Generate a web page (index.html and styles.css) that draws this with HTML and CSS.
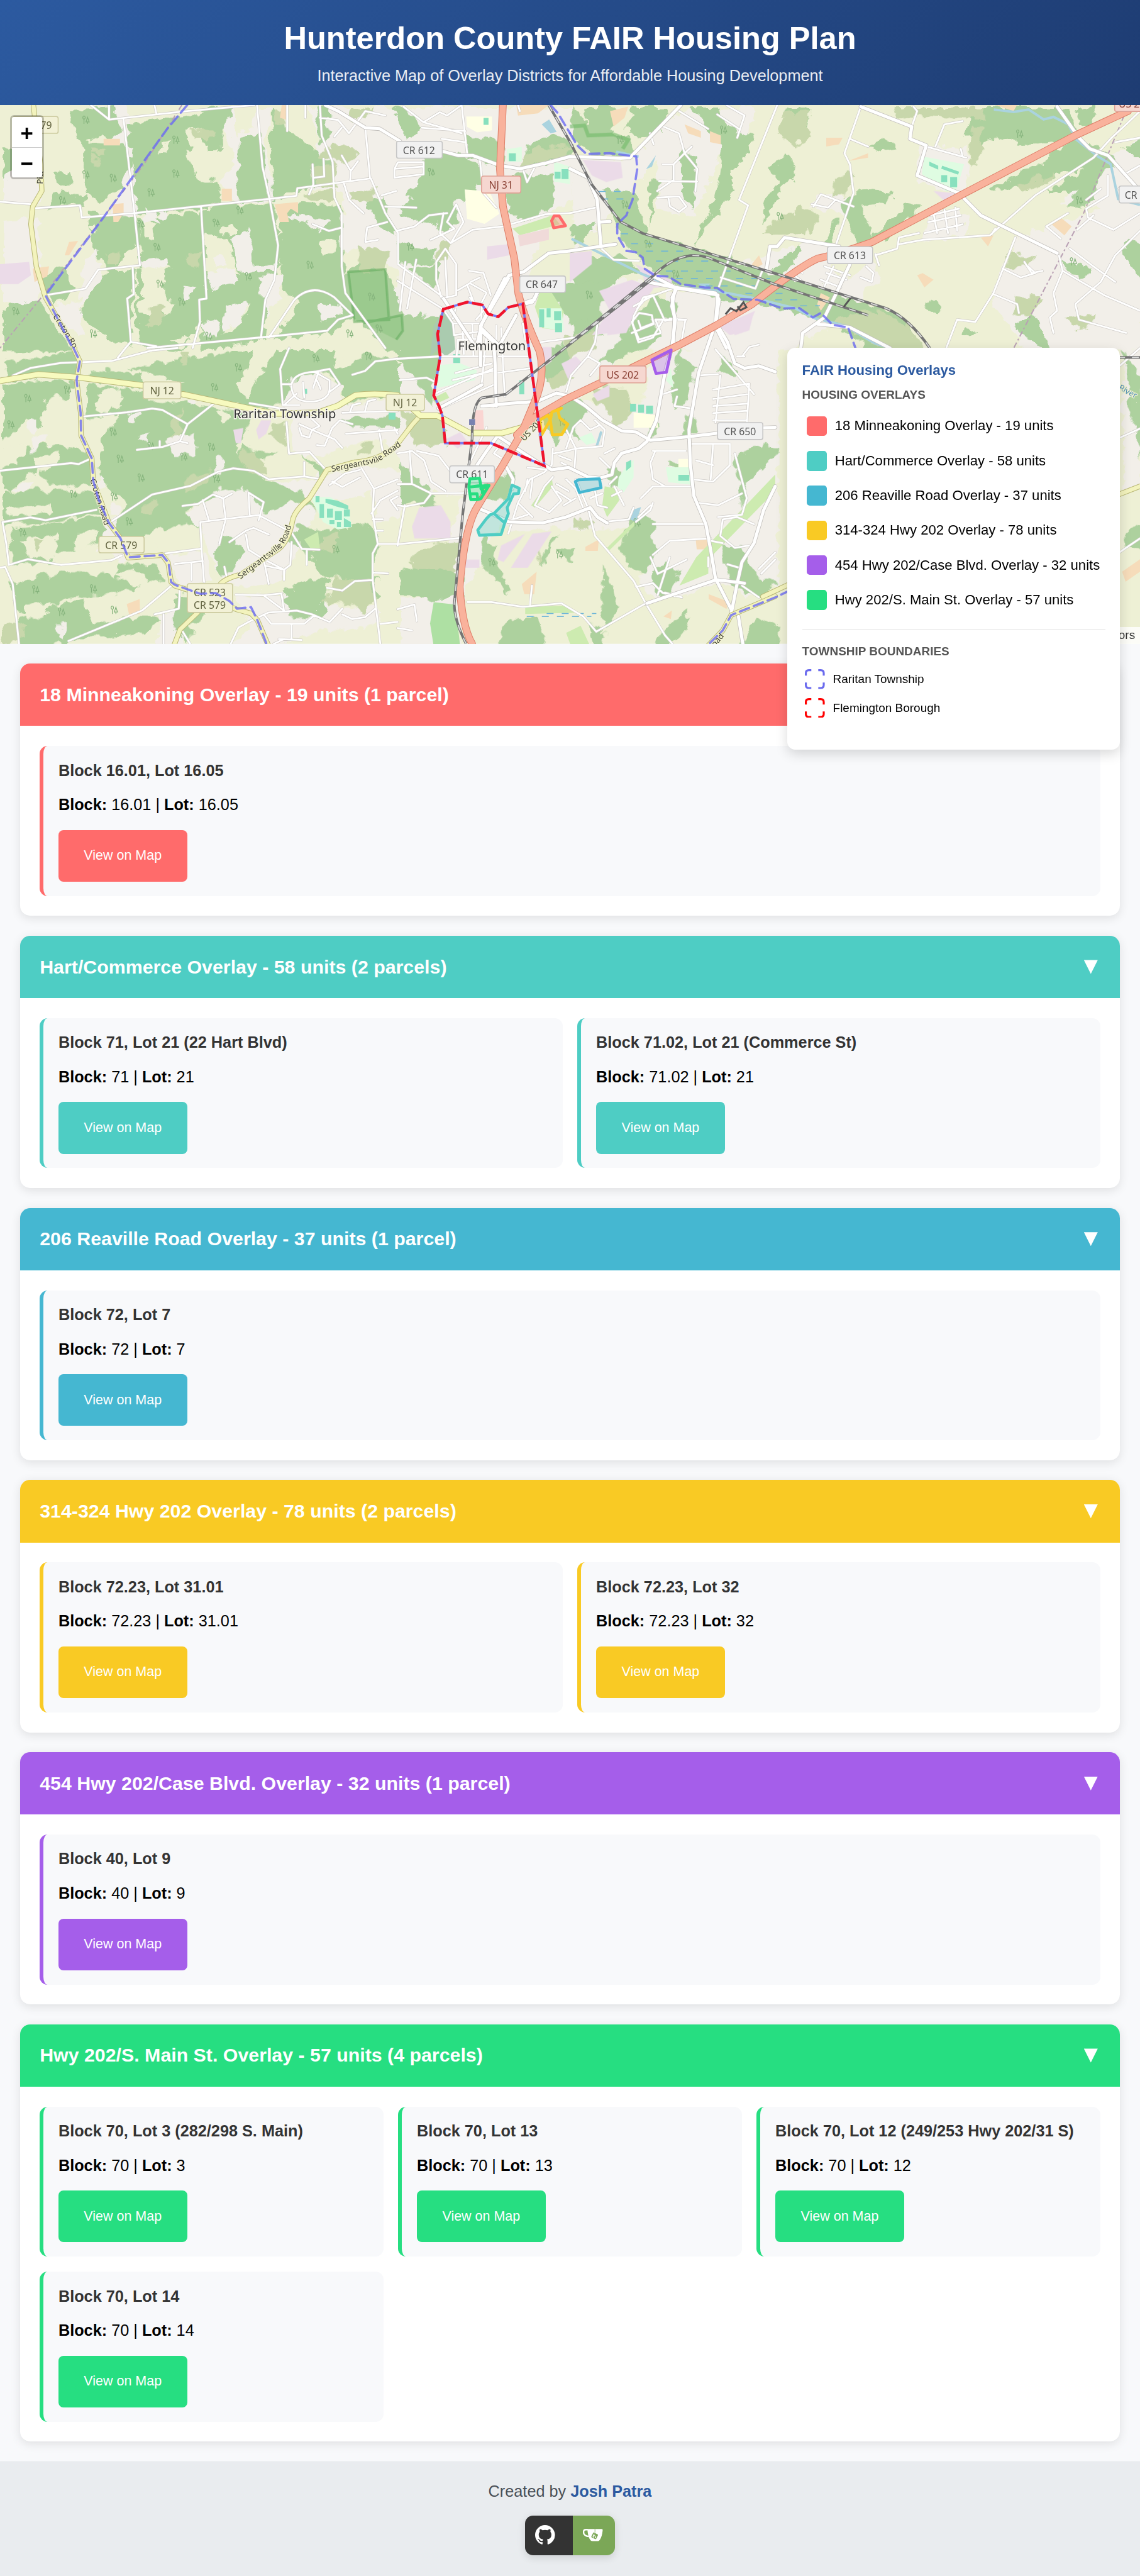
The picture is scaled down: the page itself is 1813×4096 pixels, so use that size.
FILE: index.html
```html
<!DOCTYPE html>
<html lang="en">
<head>
<meta charset="utf-8">
<title>Hunterdon County FAIR Housing Plan</title>
<link rel="stylesheet" href="styles.css">
</head>
<body>
<header class="header">
  <h1>Hunterdon County FAIR Housing Plan</h1>
  <p>Interactive Map of Overlay Districts for Affordable Housing Development</p>
</header>

<div class="map">
<svg class="map-canvas" viewBox="0 211 2294 1084" preserveAspectRatio="none">
<defs>
  <filter id="ragged" filterUnits="userSpaceOnUse" x="0" y="211" width="2294" height="1084">
    <feTurbulence type="turbulence" baseFrequency=".03" numOctaves="2" seed="4"/>
    <feDisplacementMap in="SourceGraphic" scale="22" xChannelSelector="R" yChannelSelector="G"/>
  </filter>
  <symbol id="trees" viewBox="0 0 20 24" overflow="visible"><path d="M5 22V10M5 2a3 4 0 1 0 .1 0M14 22v-5M14 5l-4 12h8z" fill="none" stroke="#86b47d" stroke-width="1.2"/></symbol>
  <g id="streets">
    <g transform="scale(.7315 .4464)">
      <path d="M250 473L300 538L515 500L700 473M340 538L370 960L385 1195L270 1215L235 1300L125 1330M365 1200L368 1325L350 1345L360 1540L345 1568M360 1540L430 1560M0 908L50 915L90 920L92 938L220 925L225 980L370 960L735 897L815 882L818 848L1020 803L1060 960L1095 1050L1095 1190L1220 1340M553 930L568 1345L548 1350L550 1450L530 1568M707 473L722 750L742 900L765 1105L755 1260L730 1350L718 1520M880 473L885 610L915 730L920 890L940 960L940 1200L950 1320L1060 1568M405 1568L718 1520L900 1490L930 1440L970 1420M740 1520L810 1350Q860 1270 920 1340L970 1420M880 530L930 540L960 600L1005 500L1060 520M940 575L920 615M1005 575L1018 803M860 740L862 830L850 875M865 800L892 795L890 715M940 700L965 770L985 725M965 770L963 815M945 820L960 900L1000 960M1085 800L1165 785L1165 730L1095 730L1085 760ZM1085 760L1165 750M1050 880L1090 860M1060 930L1145 935M1065 1000L1010 1025L1005 1090L1040 1080M1090 1040L1140 1020L1180 970L1230 960M1185 1080L1250 1030L1230 1000L1255 920L1275 1000L1240 1095L1210 1050L1220 960M1240 1095L1300 1035L1383 1020L1500 965L1568 960M1110 480L1165 550L1270 600M1165 550L1210 505L1230 520L1270 473M1160 575L1280 590M1215 625L1280 640M1270 473L1285 690M1320 720L1330 870L1365 935M1425 473L1430 500M1200 1180L1225 1120L1255 1190L1255 1330L1215 1345L1200 1260ZM1225 1160L1230 1340M1290 1220L1330 1230L1350 1330M1295 1270L1320 1250M1440 770L1450 820L1475 740M1310 1440L1330 1400M1115 1180L1100 1400M1145 1170L1120 1390M300 473V538M425 473L430 510M790 473L790 590M840 473V530M860 1010L905 1040L940 1025"/>
    </g>
    <g transform="translate(1147 0) scale(.7315 .4464)">
      <path d="M570 473L465 900L490 925L410 1290M250 565L300 600L315 690L350 760L345 860M315 690L285 740L285 810L240 860M245 815L350 818M240 890L300 885L320 930L300 955L275 930L270 885M315 690L335 660M255 740L285 740M430 473L480 520L460 620M405 515L465 580M300 500L380 580M220 600L230 650M800 480L755 690L770 740L780 870L730 1110M770 625L820 660M670 930L690 875L780 930M665 920L710 935L730 900M945 480L955 500L940 570M1080 545L1030 560L1005 660M980 660L1090 710M1075 670L1080 705M840 1150L900 1120L905 1070L960 1050M840 1145L850 1195M905 1100L970 1080L1155 1060L1280 880L1440 710L1490 620L1530 560L1568 500M1160 1055L1170 1030M1225 1070L1165 1320L1115 1450L1065 1440L1035 1568M1310 1020L1360 970L1370 960M1310 1020L1350 1075M1480 790L1480 880L1420 940L1425 980L1495 1035L1568 960M1395 1035L1440 970M1345 1150L1355 1220L1470 1330L1568 1400M1355 1220L1330 1320L1340 1400L1320 1430L1330 1500M1375 1120L1440 1200L1500 1270M1568 1040L1500 1150L1460 1270L1390 1370L1400 1440L1530 1500M1190 1210L1240 1250L1280 1230L1260 1200M1250 1180L1270 1230L1300 1220M1165 1325L1230 1370L1235 1410M700 1200L770 1240M705 1230L760 1260M690 1260L745 1295M725 1200L700 1290M415 1250L510 1300L530 1215M0 960L70 935M170 1500L230 1460L225 1420L190 1410L170 1450L190 1530L250 1500L235 1440L320 1440M175 1380L230 1330L290 1295M185 1390L210 1340M610 1230L640 1270M620 1210L640 1230M800 1250L830 1270L835 1230L815 1200M80 1110L120 1170L190 1175M1530 780L1568 745M1500 640L1568 620M1510 850L1530 900M1420 900L1460 850M990 970L1070 940M985 1000L1075 970M975 1050L1080 1010M1000 960L1010 1050M1030 945L1040 1050M1060 935L1065 1040"/>
    </g>
    <g transform="translate(0 700) scale(.5102 .3827)">
      <path d="M50 145L120 105L240 78L440 68L600 12L700 0M465 50L495 0M325 360L500 338L600 318L640 325L740 400L850 285M740 400L710 490L640 520L540 535M630 520V490M710 490L740 500M0 645L280 605L310 610L360 580M430 920L600 770L750 725L860 650L920 632L1000 645L1060 690L1200 675L1270 690M10 915L120 890L180 905L380 850M10 915L25 1030L35 1140L110 1110L240 1140L440 1115L480 1090M0 1155L20 1150L50 1240L75 1555M650 1080L790 1055M790 915L795 1060L805 1230M790 915L880 900L1020 878L1150 970L1190 1055L1260 1060M690 1135L800 1120M755 1130V1220M720 830L780 820L840 770L880 790L915 765M800 800L825 910M880 790L890 900L865 1030M980 760L1040 810L1020 905M980 760L985 875M905 1020L970 960L1000 945L1060 980M970 980L980 1060L1040 1110L1060 1240M1040 1110L1120 1165L1120 1220M1150 1020L1145 1140L1120 1165L1050 1145M1210 1060V1140M270 1540L560 1380L680 1245M680 1245L710 1260L705 1370L610 1400M645 1400V1555M1140 0L1105 110L1115 300M1115 190H1150Q1160 130 1240 125L1300 110L1340 190L1300 230V170L1240 125M1150 200Q1150 290 1240 280Q1300 270 1300 210M1195 180L1200 260M1255 130L1235 210M1250 170L1265 215M1115 300H1180M1170 240L1120 300M985 290L1120 320M1130 390L1140 555L1220 545L1285 640M1180 400L1230 430L1220 470L1190 460L1180 420M1230 430L1320 480L1350 525M1250 510L1280 515L1310 420L1340 380L1390 400M1230 430L1260 410L1220 360M1350 340L1568 330M1380 340L1390 300L1420 290M1440 330L1450 280L1480 270M1390 140L1440 120L1480 70L1568 55M1365 450L1568 430M1495 430L1510 550M1555 420L1568 450M1425 630L1475 740L1470 870L1490 1030L1470 1080V1220L1500 1555M1300 720L1360 660L1420 640M1310 700L1350 730L1420 680M1475 740L1568 690M1490 1030H1568M1465 870L1500 800L1568 750M1470 900H1510M1480 960H1510M1290 1260L1350 1275L1400 1225L1470 1220M1470 1180L1530 1185M930 1297L1040 1300L1120 1380M1040 1300L1110 1290L1120 1380M980 1440L1060 1390L1170 1380L1230 1400L1300 1440L1350 1370M1040 1400L1070 1450L1200 1450L1240 1405M1150 1450V1530M1350 1400L1390 1425L1440 1415L1480 1370M910 1555L940 1470L980 1440M885 1150L895 1210M1500 1450L1568 1440M720 1490L750 1555M1100 1530L1190 1535M1568 780L1540 800L1568 850M1200 600V670M1080 1555L1120 1530"/>
    </g>
    <g transform="translate(800 560) scale(.4847 .4753)">
      <path d="M0 10L190 130L230 190L340 190M230 190L235 240L340 225M245 330L250 260L340 255M350 120L345 220M175 330H400M270 200L275 320M310 190L315 330M240 400L390 360M230 430L400 390M150 490L400 380M200 540L400 450M410 200L405 540M430 210L445 500M460 300L530 300M420 330L540 330M410 400L550 380M590 270L740 250L830 180M830 190L820 270L790 330L720 410L700 480M790 330L840 360L800 410M980 160L1020 80L1060 70L1110 180L1160 170M980 160L975 190L1000 270L1060 250L1100 180M1000 180L1010 210L1060 190M1130 170L1195 175L1180 260M1320 300L1480 490M1255 410L1330 405M1310 470L1460 445L1450 620M1310 510L1450 490M1310 540L1450 530M1310 570L1450 560M1310 600L1450 600M1340 410L1320 610M1410 330L1440 330M1430 330L1460 290L1500 280M1160 500L1150 540L1220 550M1160 470L1100 490M1070 730L1050 780L1060 850L1110 880M1060 730L1195 730M1210 730L1220 700L1380 700L1380 790L1310 860L1220 850M1240 770L1310 790M1310 700L1300 850M1400 740L1450 930L1430 1000L1330 1010M1250 950L1330 960L1430 910M1060 1040L1280 1040M1280 1050L1300 1110L1350 1120M1060 1170L1130 1110L1300 1100M1050 1180L1080 1250L1200 1190M1130 1180L1080 1340M1010 930L1060 880L1220 880M990 1030L1050 980L1060 950M1350 1020L1340 1090L1400 1140L1460 1130M1350 1020L1410 1010L1480 1040M1370 1210L1420 1225M1500 1230L1568 1160M1510 1250L1568 1190M740 850L790 970L820 1090L980 1280L1030 1375L1110 1510L1150 1557M610 820L640 790L645 720M600 720L590 660M630 810L540 800M645 840L610 880L570 960L630 990L680 940L640 880M610 820L550 850L500 950L460 1080M500 950L560 1010M540 850L530 900M560 850L550 930M700 720L730 630L760 600M700 640L740 720L850 710L860 640L820 600M760 600L800 640L840 620M650 740L700 730L740 720L735 800M670 750L720 770M680 780L700 790M700 850L740 890L770 970M660 870L710 900M660 900L720 940M690 960L740 930M820 900L830 960L870 970M800 930L850 910M820 1000L860 1030L960 1020L980 970M900 880L940 960M890 920L930 900M880 870L910 840M860 740L900 720M840 760L880 800M1000 1010L1050 960M0 740L60 730L110 770L140 860L200 900M50 730L60 870L140 910L290 908M0 870L60 870M0 960L30 965L110 950L140 910M30 960L0 1130M0 1125L290 1095M80 730L170 750L230 830M0 340L170 330M10 430L120 420L160 440M290 1370L390 1370L520 1390L680 1375L770 1430L825 1495L1030 1375M550 1380L558 1300M990 1305L1060 1290L1100 1330L1150 1345M1110 1330L1180 1350M260 1557L0 1557M0 1400L70 1380L80 1450M0 1480L60 1490M370 630L290 800M430 700L400 740L430 760M450 800L480 850L470 890M540 1000L450 1030M230 170L240 130M250 50L300 20L370 60L350 100M290 30L320 110L300 80M1430 1300L1500 1350M1290 1220L1290 1180M370 230L350 440M520 190L530 260"/>
    </g>
    <path d="M2254 1110L2294 1083M2254 735L2294 700M2254 880L2294 862"/>
  </g>
  <g id="avenues">
    <path transform="scale(.7315 .4464)" d="M895 473L930 500L1005 575L1045 580L1100 635M1215 680L1260 700L1300 700L1375 745L1430 760L1500 735L1568 705M1568 1130L1510 1140L1440 1225L1400 1240L1325 1460L1310 1568M1440 1365L1470 1350L1480 1310M1325 1480L1380 1568M1420 1420L1370 1568M1220 1345L1310 1568"/>
    <path transform="translate(1147 0) scale(.7315 .4464)" d="M305 473L165 710M0 705L140 712L165 710M0 760L50 800L75 900L85 1110M0 1130L125 1100M85 1000L110 998M800 480L940 570L935 625L980 655L955 790L1070 870L1130 970L1340 1140M1340 480L1400 620L1430 670L1480 700L1568 860M770 1190L730 1330L700 1430L640 1500L635 1568M680 1460L770 1475L880 1568M230 1245L290 1295L400 1320L410 1350L400 1470L430 1568M290 1295L280 1380L290 1440L280 1568M540 1220L550 1110L570 1110L590 1070L740 1110"/>
    <path transform="translate(800 560) scale(.4847 .4753)" d="M445 0L345 200L345 220L400 270L405 360L410 540M345 220L345 370M380 140L460 0M345 230L330 290M170 550L280 490L350 450M350 540L470 528L580 520L660 485L720 500L780 540L850 600L930 645L990 650L1050 685L1205 670L1330 655M1568 630L1515 632M1160 40L1140 80L1150 170L1145 270L1110 400L1075 600L1035 690L1000 720L930 740L900 780L890 830L840 845L790 840L710 800L640 810L610 790M1040 15L1160 40L1330 70L1320 190L1250 400L1210 640L1215 780L1230 920L1280 1040L1300 1150L1320 1270L1385 1400M1568 880L1520 980L1480 1120L1430 1200L1410 1290L1385 1420M1415 1430L1435 1557M1035 1375L1325 1275L1440 1290M1330 200L1370 270L1400 360L1440 380L1500 370L1568 395M340 975L400 1000L460 1030L600 1035L700 1010L800 970L830 1010L870 1035M330 790L370 730L420 660M420 670L600 790M450 795L480 850L475 890M520 110L560 100L580 60"/>
  </g>
  <g id="county-roads">
    <path transform="scale(.7315 .4464)" d="M92 473L100 600L112 740L115 860L90 930L85 1010L100 1200L125 1340L205 1568"/>
    <path transform="translate(0 700) scale(.5102 .3827)" d="M290 0L315 70L302 170L318 340L320 460L362 580L368 700L430 920L475 1000L505 1102L640 1088L663 1130L675 1230L690 1250L790 1292L935 1375L990 1395L1015 1430L1060 1568M685 1568L710 1480L780 1390M870 1240Q890 1210 950 1190L1100 1055Q1140 1010 1155 900Q1165 850 1220 790L1290 640L1400 600Q1500 590 1568 510"/>
    <path transform="translate(800 560) scale(.4847 .4753)" d="M0 700L60 620L95 580M1568 1345L1385 1425L1350 1490L1270 1575"/>
    <path d="M1535 1200L1610 1165M2240 999L2294 978"/>
  </g>
  <g id="state-road">
    <path d="M0 766L76 753L158 759L286 775M368 793L551 832L640 830L680 816L715 795Q750 790 800 795L846 836L880 836L945 871H1010L1050 860"/>
  </g>
  <g id="trunk">
    <path d="M1012 211L1006 340L1012 415L1035 520L1043 590Q1055 640 1086 707Q1098 760 1075 810L1050 870L1012 935L960 1020Q935 1060 925 1180Q930 1260 950 1295"/>
    <path d="M2270 223L2164 272L1915 402L1754 487Q1690 510 1645 520Q1610 535 1513 612L1440 655L1370 692L1240 755L1139 803L1075 840L1040 875"/>
  </g>
  <g id="rail">
    <path d="M1104 211L1147 285L1190 370L1249 446L1293 469L1557 549L1783 620Q1830 640 1871 700M1147 690L1315 554Q1370 500 1425 518L1557 571L1747 634M1314 560L1091 736L1018 793L970 800Q950 810 950 883L931 1035L914 1216Q915 1250 938 1295M2250 719H2294"/>
  </g>
  <path id="croton-a" d="M106 636L148 702L153 744"/>
  <path id="croton-b" d="M181 965L211 1060L235 1110"/>
  <path id="serg-a" d="M484 1165L565 1103Q585 1080 594 1020"/>
  <path id="serg-b" d="M668 949L760 930L812 893"/>
</defs>

<rect y="211" width="2294" height="1084" fill="#eef0d5"/>

<g filter="url(#ragged)">
<!-- built-up land -->
<g fill="#f2efe9">
  <path transform="scale(.7315 .4464)" d="M255 473L340 473L360 560L300 600ZM300 540L345 540L370 960L290 970L330 800ZM580 473H740L720 640L750 890L640 910L600 830L640 700ZM840 473H1568V900L1500 940L1380 1568H1180L1100 1420L1060 1400L1090 1200L1000 1120L900 1120L840 1000L940 960L930 850L820 830L840 700L870 620ZM0 980L100 970L110 1300L70 1400L0 1360ZM0 770L60 700L110 760L100 910L0 900Z"/>
  <path transform="translate(1147 0) scale(.7315 .4464)" d="M0 700H180L220 560L320 473H500L470 640L420 620L380 780L330 960L240 930L230 700L180 800L0 1130ZM390 1220L640 1070L740 1110L700 1200L760 1240L830 1170L850 1240L740 1420L600 1560H200L50 1568L290 1290L500 1340ZM950 640L1090 660L1080 880L950 800ZM980 930L1090 950L1080 1060L960 1070ZM1220 1060L1568 860V1568H1250L1150 1340ZM1340 900L1420 760L1568 600V960ZM670 860L790 880L760 960L660 930Z"/>
  <path transform="translate(0 700) scale(.5102 .3827)" d="M860 740L950 720L1100 780L1230 840L1140 1120L1060 1250L880 1220L790 1000L720 850ZM1050 690L1280 660L1420 600L1568 650V880L1480 900L1460 740L1350 780L1230 790L1170 740L1060 740ZM1110 110L1220 100L1340 180L1330 280L1200 330L1380 280L1568 250V560L1480 460L1330 500L1260 550L1140 550V370L1110 330ZM650 1080L800 1050L820 1200L700 1250ZM920 1290L1140 1280L1330 1350L1480 1340L1480 1440L1240 1480L1080 1555H890L980 1440ZM400 900L480 850L560 960L480 1110L370 1060ZM620 1380L720 1370L700 1555H610Z"/>
  <path transform="translate(800 560) scale(.4847 .4753)" d="M0 0H1040L900 330L720 510L1000 530L1050 300L1568 260V1290L1440 1340L1330 1280L1060 1360L1000 1290L1020 1030L860 1050L400 1050L330 1190L270 1300L240 1557H0V1340L120 1340L260 900L0 900ZM950 200L1120 60L1180 70L1190 260L1050 300Z"/>
  <path d="M2254 700H2294V980H2254Z"/>
</g>

<!-- woodland -->
<g fill="#add19e">
  <path transform="scale(.7315 .4464)" d="M190 485L300 473L330 570L300 620L270 590L230 640L180 560ZM0 650L40 670L30 740L0 800ZM135 770L180 765L190 810L160 830ZM345 545L520 500L560 500L600 560L600 690L560 660L545 570L510 560L500 640L590 800L600 910L540 930L370 960ZM220 720L360 690L330 820L270 900L230 860ZM150 850L230 870L220 920L120 925ZM220 620L340 640L340 700L220 740ZM540 473L640 473L600 560ZM650 610L710 590L730 880L650 900ZM740 473L800 600L840 640L910 720L850 750L860 820L740 890ZM820 900L930 910L940 1220L1000 1130L1060 1200L1100 1420L1150 1400L1210 1480V1568H1060L970 1420L900 1490L740 1520L820 1350L760 1260L765 940ZM500 990L560 930L745 900L765 1110L750 1250L650 1230L620 1060L530 1080ZM240 940L370 970L380 1090L340 1110L300 1230L240 1080ZM375 980L550 940L560 1250L470 1220L440 1150L380 1200ZM270 1220L365 1200L360 1330L350 1540L290 1520L210 1400ZM370 1200L550 1200L560 1400L490 1568L370 1540ZM560 1220L740 1240L730 1350L720 1520L540 1568ZM0 1380L100 1340L160 1490L190 1568H0ZM1170 650L1285 690L1320 760L1300 870L1240 900L1190 1000L1090 950L1140 850ZM1270 590L1380 640L1375 740L1290 700ZM1400 790L1520 760L1510 920L1440 980L1390 940ZM1440 640L1510 590L1568 640L1568 700L1440 740ZM1080 1080L1190 1110L1180 1180L1090 1180ZM1070 473H1110L1160 560L1120 620ZM1190 880L1240 860L1250 1000L1200 1040ZM100 1230L170 1190L200 1300L140 1360ZM410 650L470 600L520 640L480 800L430 760ZM1180 1190L1200 1150L1190 1300L1120 1200ZM1130 830L1190 800L1180 860L1110 880ZM860 473H900L900 600L870 640ZM1000 890L1050 870L1080 1050L1030 1000Z"/>
  <path transform="translate(1147 0) scale(.7315 .4464)" d="M0 473L50 560L150 600L180 690L50 690L0 620ZM30 473H130L100 600L50 590ZM170 473L260 473L250 560L190 620L150 570ZM330 473H400L450 580L500 600L480 690L430 760L440 850L370 1020L330 1110L380 930L400 780L410 640L360 560ZM80 840L170 850L190 1000L210 1040L380 1130L540 1220L680 1280L770 1340L900 1400L960 1568H820L700 1430L660 1430L590 1390L500 1350L440 1350L300 1280L210 1200L130 1060ZM210 810L240 800L215 1020ZM520 1000L530 880L570 810L540 740L590 680L620 770L570 850ZM580 473H650L640 600L580 560ZM730 900L790 850L880 860L870 900L790 920L820 1040L860 1010L910 920L960 910L870 1060L800 1110L770 1040ZM1100 473H1360L1390 600L1470 680L1500 740L1380 760L1200 850L1150 830L1280 730L1370 620L1240 640L1170 600L1120 650L1080 590ZM820 650L860 610L890 650L850 670ZM1360 910L1410 780L1450 780L1420 920ZM1300 850L1440 730L1470 720L1450 800L1370 850ZM980 1340L1015 1370L1005 1400L975 1380ZM1075 1460L1110 1480L1100 1510L1070 1500ZM1220 1440L1270 1400L1310 1568L1240 1500ZM1340 1160L1420 1180L1420 1240L1370 1230ZM1530 1060L1568 1100V1260L1510 1110ZM1568 700L1510 650L1568 620ZM550 1200L620 1080L630 1110L560 1260ZM0 1160L130 1130L190 1200L100 1270L0 1350ZM690 1080L720 980L735 990L710 1090ZM300 640L340 700L330 940L300 860ZM0 1000L60 990L40 1080L0 1100ZM0 1400L80 1380L60 1480L0 1520ZM1380 473H1440L1420 560L1390 540Z"/>
  <path transform="translate(0 700) scale(.5102 .3827)" d="M0 60L280 0L300 140L150 125L30 160ZM0 180L150 150L295 165L260 260L180 240L140 410L90 360L0 480ZM340 100L560 120L540 190L330 155ZM500 90L900 0H1300L1310 80L1360 100L1400 60L1568 80V240L1400 250L1350 290L1340 190L1280 110L1170 130L1130 180L1110 290L970 300L730 240L600 190L720 170ZM330 180L560 210L570 260L840 290L980 340L950 420L920 500L960 620L1060 690L1180 740L1230 840L1130 790L1030 860L960 720L860 740L720 840L780 920L780 1000L580 960L480 1060L440 930L490 800L400 700L380 600L410 420L470 330L330 360ZM0 510L240 500L350 560L360 700L200 720L130 630L30 740L0 720ZM0 740L370 740L400 850L180 900L0 910ZM30 930L390 870L410 1000L240 1060L180 1120L40 1120ZM1350 90L1440 0L1568 60L1490 210L1340 280ZM1190 540L1280 630L1260 680ZM1260 940L1440 910L1480 1000L1460 1170L1300 1190L1240 1140L1180 1020L1100 1010L1170 920ZM460 1110L600 1130L640 1210L430 1190ZM30 1220L240 1170L420 1180L540 1250L400 1280L250 1300L210 1340L130 1350L60 1380ZM60 1400L320 1300L350 1440L540 1400L620 1400L560 1480L280 1520L220 1555H70ZM680 1280L800 1290L790 1400L690 1500ZM860 960L950 1040L920 1150L860 1180L840 1060ZM1180 1210L1290 1190L1270 1400L1140 1400L1110 1280ZM1360 1100L1480 1190L1480 1300L1400 1350L1330 1260ZM940 480L1000 530L1090 540L1020 570L980 640L930 600ZM700 1440L760 1480L720 1530ZM1330 360L1568 340V400L1380 400Z"/>
  <path transform="translate(800 560) scale(.4847 .4753)" d="M0 150L150 150L175 330L130 450L130 540L60 400L0 340ZM600 30L880 0L840 90L830 230L790 160L700 180L650 80ZM950 180L1060 60L1150 90L1130 160L1040 170L1090 240L1000 290L900 340L820 340L910 240ZM0 760L120 880L180 1000L60 940L0 950ZM570 570L740 490L790 560L720 620L740 680L680 640L640 700L600 600ZM340 850L470 810L470 870L430 920L370 920ZM340 1080L390 1110L400 1200L450 1300L440 1330L390 1260L330 1190ZM860 800L910 780L920 860L880 890ZM840 1210L880 1300L900 1380L860 1470L830 1400ZM920 1130L960 970L1050 1010L1060 1130L1010 1240L940 1200ZM1130 400L1160 280L1190 340L1230 370L1180 520L1130 540ZM1180 560L1220 570L1230 640L1170 660ZM1380 740L1500 690L1568 700V730L1480 820L1430 850L1430 960L1400 830ZM1050 1220L1100 1190L1160 1220L1130 1330L1060 1330ZM1330 1120L1410 1120L1490 1260L1560 1270L1530 1350L1370 1300ZM0 1210L50 1230L260 1230L260 1330L130 1350L50 1330L0 1330ZM450 1430L570 1430L600 1557H390ZM650 1130L730 1130L720 1190L660 1170ZM570 1190L640 1080L660 1070L590 1200ZM1110 760L1170 770L1160 800L1110 790ZM1400 1557L1480 1420L1568 1460V1557ZM780 1440L860 1490L850 1557H800ZM1070 1500L1200 1390L1180 1480L1110 1557H1050ZM1340 300L1400 390L1380 410L1320 380ZM1050 560L1070 620L1050 680L1000 560ZM590 300L680 260L700 340L650 430L600 420Z"/>
  <path d="M2254 700L2294 760V920L2270 830ZM2254 1070L2294 1040V1100L2254 1090Z"/>
</g>

<!-- clearings inside the woodland -->
<g fill="#eef0d5">
  <path transform="scale(.7315 .4464)" d="M390 970L410 960L420 1060L390 1060ZM500 660L590 660L580 720L610 740L600 800L540 800ZM600 1010L640 1000L640 1040L600 1040ZM390 1200L440 1190L445 1340L470 1350L460 1400L380 1400ZM880 1080L930 1070L920 1130L880 1140ZM440 620L460 615L460 650L430 680ZM640 473H700L690 560L640 600ZM150 930L220 930L215 970L150 980ZM240 1000L260 1000L250 1050ZM560 1040L590 1060L570 1110L550 1090ZM460 1520L510 1510L490 1560ZM650 1370L680 1340L650 1450L600 1500Z"/>
  <path transform="translate(0 700) scale(.5102 .3827)" d="M10 820L190 800L210 850L20 870ZM570 960L690 920L730 900L740 920L780 920L790 1040L620 1070ZM70 1000L220 960L190 1100L90 1080ZM290 960L370 940L360 1010L280 1060ZM0 510L90 490L80 570L0 610ZM990 0H1070L1010 130L960 250L920 190ZM1020 580L1130 500V670L1060 680ZM840 310L870 300L900 350L870 380ZM1310 0H1350L1345 75L1310 80ZM370 220L470 200L465 300L430 300L420 340L380 340ZM200 1050L260 1060L230 1120L190 1110ZM420 0H650L500 90L400 70ZM430 1170L520 1150L570 1200L510 1220ZM80 1340L180 1330L170 1400L90 1400ZM120 560L220 540L210 600L130 640Z"/>
</g>
<g fill="#f2efe9">
  <path transform="scale(.7315 .4464)" d="M225 1150L260 1110L270 1230L250 1300L210 1380ZM120 1370L210 1340L220 1500L160 1440ZM580 1140L610 1130L615 1190L580 1190ZM630 1060L680 1010L690 1210L650 1215ZM560 1210L640 1200L640 1260L570 1290ZM620 1360L670 1340L650 1450L600 1480ZM710 1230L770 1220L760 1340L730 1410L715 1350ZM380 1160L455 1145L450 1180L390 1190ZM500 1270L530 1280L520 1340L495 1350ZM880 1350L930 1360L930 1400L880 1430ZM550 1440L600 1430L590 1500L550 1500ZM390 920L420 940L430 1000L390 980ZM430 940L450 930V970H430ZM650 1180H750V1210H660ZM780 960L800 950L900 990L880 1040L840 1000Z"/>
  <path transform="translate(0 700) scale(.5102 .3827)" d="M650 470L760 430L760 550L670 550ZM530 460L580 420L580 480ZM500 320L540 320L530 370L500 370ZM90 380L130 360L130 440L90 430ZM110 450L180 440V490L110 540ZM370 680L400 660L400 720L370 740ZM840 560L870 570L860 660L830 620ZM220 1440L250 1440L240 1520H220ZM440 800L470 820L460 870L420 850ZM40 730L90 690L120 690L100 740ZM730 270L770 260L760 290H730Z"/>
</g>

<!-- scrub -->
<g fill="#c8d7ab">
  <path transform="scale(.7315 .4464)" d="M240 650H280V680H240ZM525 570L580 570L580 615L525 615ZM850 730L915 720V830L860 830ZM820 860L910 840L915 890L850 890ZM950 850L1030 830L1020 890L960 890ZM975 1100L1060 1120L1055 1210L980 1210ZM1460 660L1568 640L1540 700L1425 740L1430 700ZM955 473H1020L980 530L945 530ZM750 480L780 480L770 540L745 540ZM410 1370L445 1370L430 1450L390 1460ZM285 1130L320 1120L315 1170L285 1170ZM900 640L945 630L980 690L940 720L870 690ZM245 690L270 690L260 740ZM1200 1100L1230 1060L1220 1150L1180 1180ZM515 1130L545 1130L530 1200L510 1190Z"/>
  <path transform="translate(1147 0) scale(.7315 .4464)" d="M550 980L640 920L680 960L650 1040L520 1040ZM580 500L650 480L640 560L660 600L610 650L560 580ZM720 810L750 760L775 780L760 860L715 880ZM880 473H1130L1130 520L960 510L890 520ZM1100 560L1130 560L1125 690L1090 750ZM1230 820L1330 770L1310 820L1240 840ZM760 1400L850 1390L920 1460L970 1568H870L720 1440ZM1200 1120L1280 1160L1190 1200ZM1220 1320L1290 1330L1270 1410L1210 1400ZM1350 1420L1440 1400L1420 1460L1370 1470Z"/>
  <path transform="translate(0 700) scale(.5102 .3827)" d="M940 520L1000 530L1040 630L1040 660L960 630ZM710 680L820 630L820 670L740 740L710 730ZM540 820L600 770L620 810L580 855L540 850ZM1260 970L1320 970L1310 1050L1250 1060ZM1310 1190L1460 1200L1470 1300L1420 1380L1380 1330L1270 1330ZM670 350L710 310L700 470L670 460ZM0 1430L60 1420L100 1450L80 1500L0 1555ZM1060 370L1120 380L1120 500L1060 450ZM120 1000L160 990L150 1060ZM1410 490L1470 470L1465 540H1410ZM700 10H735L730 70L700 70Z"/>
  <path transform="translate(800 560) scale(.4847 .4753)" d="M680 240L830 200L800 290L700 330L690 320ZM140 1110L260 1100L220 1230L50 1230L30 1190ZM800 450L930 450L960 540L900 630L860 550L800 500ZM0 540L180 590L190 690L60 700ZM610 410L680 380L720 410L650 460ZM560 1100L590 1180L570 1200ZM720 1000L800 1010L790 1050L720 1040Z"/>
</g>
</g>

<!-- parks, retail, industry, water -->
<path transform="scale(.7315 .4464)" fill="#74b86a" fill-opacity=".3" stroke="#58a653" stroke-opacity=".5" stroke-width="4" d="M958 1225L1060 1213L1070 1440L975 1450ZM1000 1455L1105 1420L1108 1490L1090 1530"/>
<path transform="translate(1147 0) scale(.7315 .4464)" fill="none" stroke="#6fb968" stroke-opacity=".6" stroke-width="6" d="M0 570L40 565L50 610L120 605L160 630L145 670"/>
<g fill="#ebdbe8">
  <path transform="scale(.7315 .4464)" d="M0 1190L80 1180L85 1240L50 1280L0 1280ZM1340 1110L1400 1100V1150L1340 1170Z"/>
  <path transform="translate(1147 0) scale(.7315 .4464)" d="M35 720L140 730L145 800L100 820L60 790ZM80 1310L170 1260L230 1300L200 1370L160 1420L110 1500L60 1510L110 1400ZM180 1190L280 1260L280 1290L210 1300L200 1240ZM410 1470L510 1400L480 1490L440 1510ZM1000 860L1060 870L1030 905ZM0 1140L60 1130L60 1190L0 1270Z"/>
  <path transform="translate(0 700) scale(.5102 .3827)" d="M1010 430L1030 380L1070 380L1050 450L1020 480ZM920 430L960 420L950 500L930 500Z"/>
  <path transform="translate(800 560) scale(.4847 .4753)" d="M90 970L180 960L220 1030L220 1100L70 1100L60 1050ZM850 60L960 20L1010 90L950 230L870 240L890 150ZM430 1130L530 1080L440 1200L415 1190ZM560 1080L640 1070L540 1225L470 1225ZM600 290L640 290L640 350L600 380L590 330ZM680 360L740 330L770 360L710 430ZM810 490L880 450L880 500L830 520ZM1380 190L1480 140L1460 220L1400 240ZM280 1190H340V1225H280ZM200 680L260 650L290 690L250 720Z"/>
</g>
<g fill="#f6dcba">
  <path transform="scale(.7315 .4464)" d="M285 625H330V655H285ZM610 850H638V905H610ZM755 920L820 910V960L800 940L790 960L795 1000L770 1000ZM310 920L340 915V960L325 1000L312 1000ZM90 1210L135 1200L130 1245L95 1270ZM1420 473H1510L1480 510L1425 520ZM190 1090L215 1085L190 1150L178 1150ZM775 473H790V540L770 530Z"/>
  <path transform="translate(1147 0) scale(.7315 .4464)" d="M110 500L160 480L150 530L120 570ZM315 560L360 590L360 620L325 600ZM385 590L415 610L415 650L385 640ZM705 620L750 620L740 650L705 660ZM765 725L820 690L820 710ZM955 1240L970 1230L1000 1260L975 1295ZM975 755L1010 760L1000 820ZM1325 1010L1350 980L1380 1020L1360 1060ZM1130 1070L1165 1060L1150 1110ZM500 1190L520 1150L530 1190L510 1210ZM1170 473H1230L1220 500ZM680 1370L690 1320L715 1340L690 1400Z"/>
  <path d="M255 1215L281 1205L282 1235L260 1237ZM1178 1100L1205 1085L1203 1108H1178ZM1400 1085H1428L1425 1105H1402ZM1050 1175L1080 1150L1075 1195H1055ZM1426 1195L1465 1210L1462 1225L1426 1205ZM1335 1240L1352 1228L1350 1245ZM2258 1150L2294 1125V1150L2265 1170Z"/>
</g>
<g fill="#ffffe5"><path d="M935 381L985 385L1005 430L975 450L940 440ZM938 234H990V262L960 266L940 255ZM1275 830L1320 835L1325 860L1275 860ZM1365 923H1385V950H1365Z"/></g>
<g fill="#cdebb0">
  <path transform="scale(.7315 .4464)" d="M1410 1030L1520 970L1540 1010L1430 1060Z"/>
  <path transform="translate(800 560) scale(.4847 .4753)" d="M570 120L590 60L640 60L690 140L680 220L600 210ZM140 510L200 480L215 505L160 530ZM640 840L645 880L570 970L555 960ZM860 880L910 890L920 940L870 1010L850 960ZM1568 900L1290 1190L1290 1250L1170 1300L1240 1180L1568 830ZM870 1140L980 1030L990 1040L880 1150ZM530 1390L700 1385L740 1415L530 1420ZM700 1500L760 1470L800 1557H720Z"/>
  <path d="M612 1085L640 1070L644 1105L630 1110Z"/>
</g>
<g fill="#dffce2"><path d="M625 1000L665 1000L700 1020L708 1060L680 1065L650 1050ZM1860 315L1940 330L1925 380L1905 385L1855 350ZM1340 940L1390 940L1392 975L1345 970ZM1245 960L1262 935L1275 925V960L1255 990L1243 980ZM1115 325L1147 335V370L1115 365ZM880 735L925 730L960 745L955 765L880 780ZM1020 300L1050 295V325L1020 325ZM1085 620L1130 620L1135 665L1095 660ZM1165 880L1190 870L1200 890L1180 895ZM1340 765L1350 740L1355 780Z"/></g>
<g fill="#88e0be"><path d="M635 998h8v12h-8zM643 1014h9v28h-9zM655 1003l24 4 22 10v8l-24-6-22-8zM658 1023h12v18h-12zM674 1028h14v18h-14zM692 1025h12v14h-12zM692 1042l14 8v10h-14zM663 1046h10v8h-10zM678 1050h8v10h-8zM1870 325l18 8v8l-18-8zM1896 333l34 12-2 6-34-12zM1894 352h12v14h-12zM1912 356h14v20h-14zM973 237h10v14h-10zM1024 308h14v16h-14zM1085 622h10v36h-10zM1100 620h8v18h-8zM1115 626h14v18h-14zM1117 650h14v18h-14zM1268 812h12v16h-12zM1284 814h12v16h-12zM1300 816h14v16h-14zM1260 930l10-5v14l-10 8zM1365 955h22v12h-22zM912 712h14v18h-14zM1045 765h10v28h-10zM1116 345h12v14h-12zM1130 340h14v20h-14zM612 782h6v10h-6zM782 830h14v14h-14z"/></g>
<path transform="scale(.7315 .4464)" fill="#f0dad9" d="M1425 1060L1510 1030L1510 1080L1430 1110Z"/>
<path d="M955 825H972L974 865H955Z" fill="#fad5d2"/>
<path transform="translate(800 560) scale(.4847 .4753)" fill="#aacbaf" d="M190 130L230 180L240 300L200 330L170 300L135 330L150 200Z"/>
<path transform="translate(800 560) scale(.4847 .4753)" fill="#aee0a3" d="M150 1370L240 1380L260 1557H150L135 1460Z"/>
<g fill="none" stroke="#aad3df" stroke-width="4">
  <path d="M2000 220L2040 225L2070 220L2100 240L2120 235L2150 250L2165 280L2210 315L2235 330L2250 400L2294 412M1240 305L1285 315M1150 480L1290 550L1350 575L1440 585L1520 600L1600 620L1640 640L1700 655L1760 690L1790 700M1210 868L1200 900"/>
</g>
<path fill="#aad3df" d="M1290 1020L1280 1050L1268 1045L1275 1025ZM1090 250L1105 240L1120 265L1108 268ZM1300 340L1320 312L1312 335ZM1403 570L1430 570L1420 580Z"/>
<path d="M1205 385h50M1210 400h45M1250 470h30M1270 490h60M1300 505h80M1320 525h110M1340 545h130M1360 560h190M1420 575h120M1500 590h80M1560 603h60M1610 615h40M1060 1240h130M1100 1234h100" stroke="#6fb6d8" stroke-width="1.600" stroke-dasharray="11 13" fill="none"/>
<path d="M366 211L290 330L90 590L0 700M2262 232L2180 430L2040 700" class="county-line"/>

<g>
  <use href="#trees" x="165" y="230" width="16" height="22"/><use href="#trees" x="165" y="340" width="16" height="22"/><use href="#trees" x="346" y="270" width="16" height="22"/><use href="#trees" x="346" y="338" width="16" height="22"/><use href="#trees" x="296" y="376" width="16" height="22"/><use href="#trees" x="220" y="347" width="16" height="22"/><use href="#trees" x="118" y="392" width="16" height="22"/><use href="#trees" x="276" y="440" width="16" height="22"/><use href="#trees" x="308" y="486" width="16" height="22"/><use href="#trees" x="427" y="437" width="16" height="22"/><use href="#trees" x="475" y="412" width="16" height="22"/><use href="#trees" x="492" y="545" width="16" height="22"/><use href="#trees" x="616" y="522" width="16" height="22"/><use href="#trees" x="740" y="586" width="16" height="22"/><use href="#trees" x="755" y="650" width="16" height="22"/><use href="#trees" x="696" y="660" width="16" height="22"/><use href="#trees" x="412" y="665" width="16" height="22"/><use href="#trees" x="314" y="560" width="16" height="22"/><use href="#trees" x="180" y="660" width="16" height="22"/><use href="#trees" x="24" y="615" width="16" height="22"/><use href="#trees" x="358" y="596" width="16" height="22"/><use href="#trees" x="818" y="485" width="16" height="22"/><use href="#trees" x="860" y="335" width="16" height="22"/><use href="#trees" x="48" y="790" width="16" height="22"/><use href="#trees" x="14" y="843" width="16" height="22"/><use href="#trees" x="128" y="773" width="16" height="22"/><use href="#trees" x="424" y="768" width="16" height="22"/><use href="#trees" x="472" y="728" width="16" height="22"/><use href="#trees" x="628" y="710" width="16" height="22"/><use href="#trees" x="734" y="705" width="16" height="22"/><use href="#trees" x="220" y="858" width="16" height="22"/><use href="#trees" x="234" y="912" width="16" height="22"/><use href="#trees" x="296" y="886" width="16" height="22"/><use href="#trees" x="276" y="950" width="16" height="22"/><use href="#trees" x="418" y="888" width="16" height="22"/><use href="#trees" x="362" y="908" width="16" height="22"/><use href="#trees" x="428" y="952" width="16" height="22"/><use href="#trees" x="140" y="983" width="16" height="22"/><use href="#trees" x="222" y="988" width="16" height="22"/><use href="#trees" x="252" y="1038" width="16" height="22"/><use href="#trees" x="38" y="1060" width="16" height="22"/><use href="#trees" x="64" y="1175" width="16" height="22"/><use href="#trees" x="180" y="1173" width="16" height="22"/><use href="#trees" x="116" y="1220" width="16" height="22"/><use href="#trees" x="222" y="1216" width="16" height="22"/><use href="#trees" x="668" y="1094" width="16" height="22"/><use href="#trees" x="1240" y="270" width="16" height="22"/><use href="#trees" x="1448" y="250" width="16" height="22"/><use href="#trees" x="1250" y="400" width="16" height="22"/><use href="#trees" x="1296" y="480" width="16" height="22"/><use href="#trees" x="1352" y="540" width="16" height="22"/><use href="#trees" x="1178" y="582" width="16" height="22"/><use href="#trees" x="1562" y="424" width="16" height="22"/><use href="#trees" x="2044" y="258" width="16" height="22"/><use href="#trees" x="2164" y="392" width="16" height="22"/><use href="#trees" x="2152" y="515" width="16" height="22"/><use href="#trees" x="1124" y="838" width="16" height="22"/><use href="#trees" x="1118" y="1104" width="16" height="22"/><use href="#trees" x="982" y="1120" width="16" height="22"/><use href="#trees" x="1274" y="1040" width="16" height="22"/>
</g>

<use href="#streets" class="street-case"/><use href="#streets" class="street"/>
<use href="#avenues" class="avenue-case"/><use href="#avenues" class="avenue"/>
<use href="#county-roads" class="county-case"/><use href="#county-roads" class="county"/>
<use href="#state-road" class="state-case"/><use href="#state-road" class="state"/>
<use href="#trunk" class="trunk-case"/><use href="#trunk" class="trunk"/>
<use href="#rail" class="rail-base"/><use href="#rail" class="rail-dash"/>
<path d="M1460 632l10-12 12 6 14-18 6 10-12 6-6-8M1698 617l14-18" fill="none" stroke="#555" stroke-width="3"/>
<rect x="944" y="843" width="12" height="12" fill="#7981b0"/>

<!-- municipal names sit under the boundary lines -->
<g class="shield">
  <rect x="798" y="284" width="92" height="34"/><rect x="1046" y="555" width="92" height="33"/><rect x="1665" y="496" width="91" height="34"/><rect x="2252" y="374" width="91" height="34"/><rect x="1444" y="850" width="91" height="34"/><rect x="905" y="937" width="90" height="34"/>
</g>
<g class="shield pink"><rect x="969" y="354" width="79" height="34"/><rect x="1207" y="736" width="93" height="34"/><rect x="2243" y="190" width="93" height="34"/></g>
<g class="shield cream"><rect x="26" y="234" width="91" height="34"/><rect x="288" y="768" width="76" height="34"/><rect x="777" y="793" width="77" height="33"/><rect x="199" y="1079" width="91" height="33"/><rect x="377" y="1174" width="91" height="58"/></g>
<g class="shield-text">
  <text x="843" y="310">CR 612</text><text x="1090" y="579">CR 647</text><text x="1710" y="521">CR 613</text><text x="2276" y="399">CR</text><text x="1489" y="875">CR 650</text><text x="950" y="962">CR 611</text>
  <g fill="#8a4034"><text x="1008" y="379">NJ 31</text><text x="1253" y="761">US 202</text><text x="2272" y="216">US 2</text></g>
  <g fill="#626340"><text x="93" y="259">79</text><text x="326" y="793">NJ 12</text><text x="815" y="817">NJ 12</text><text x="244" y="1104">CR 579</text><text x="422" y="1199">CR 523</text><text x="422" y="1224">CR 579</text></g>
</g>
<g class="road-text">
  <text><textPath href="#croton-a">Croton Ro</textPath></text>
  <text><textPath href="#croton-b">Croton Road</textPath></text>
  <text><textPath href="#serg-a">Sergeantsville Road</textPath></text>
  <text><textPath href="#serg-b">Sergeantsville Road</textPath></text>
  <text transform="translate(1055 888) rotate(-47)">US 202</text>
  <text transform="translate(1432 1310) rotate(-50)">Road</text>
  <text transform="translate(86 370) rotate(-88)">Pitt</text>
  <text transform="translate(2250 783) rotate(28)" fill="#4f8fb8">River</text>
</g>
<g class="place-text"><text x="990" y="705">Flemington</text><text x="573" y="841">Raritan Township</text></g>

<!-- parcel overlays -->
<g class="parcels" transform="translate(800 560) scale(.4847 .4753)">
  <path fill="#4ecdc4" stroke="#4ecdc4" d="M475 875L505 888L502 910L482 912L455 970L460 995L445 1035L400 995L460 932ZM385 1000L400 995L445 1035L430 1083L340 1087L333 1065L368 1018Z"/>
  <path fill="#45b7d1" stroke="#45b7d1" d="M738 860L752 852L838 848L845 886L755 906Z"/>
  <path fill="#f9ca24" stroke="#f9ca24" d="M590 600L625 578L634 600L598 662ZM641 565L680 549L666 560L673 590L707 617L682 660L643 662L634 600Z"/>
  <path fill="#a55eea" stroke="#a55eea" d="M1056 345L1136 303L1116 397L1073 402Z"/>
  <path fill="#26de81" stroke="#26de81" d="M300 848L340 845L346 876L296 883ZM296 883L380 876L346 932L333 936H304ZM303 912L330 911L333 936M346 905H360L346 890L380 876"/>
</g>
<path class="parcels" fill="#ff6b6b" stroke="#ff6b6b" d="M1110 444L1115 434H1125L1138 454L1114 458Z"/>

<!-- municipal boundaries -->
<g class="raritan">
  <path transform="scale(.7315 .4464)" d="M515 473L460 580L280 990L125 1330L200 1568M1515 473L1535 510L1568 600"/>
  <path transform="translate(1147 0) scale(.7315 .4464)" d="M0 600L20 655L45 693L110 690L182 705L185 760L172 900L155 970L130 1010L130 1060L155 1130L180 1135L200 1160L205 1210L235 1243L270 1245L305 1280L370 1295L405 1297L450 1347L515 1350L585 1390L630 1387L668 1430L690 1410L722 1463L765 1475L790 1590"/>
  <path transform="translate(0 700) scale(.5102 .3827)" d="M290 0L315 70L302 170L318 340L320 460L362 580L368 700L390 800L430 920L475 1000L505 1100L640 1088L665 1130L675 1230L690 1245L790 1292L850 1288L905 1330L935 1370L990 1362L1015 1430L1055 1568"/>
  <path transform="translate(800 560) scale(.4847 .4753)" d="M1630 1320L1568 1350L1385 1425L1350 1490L1280 1560"/>
</g>
<g transform="translate(800 560) scale(.4847 .4753)">
  <path class="borough-under" d="M190 130L290 100L352 112L376 150L418 162L460 122L520 107L610 793L388 697H198L186 580L172 540L150 495L177 330L166 235Z"/>
  <path class="borough" d="M190 130L290 100L352 112L376 150L418 162L460 122L520 107L610 793L388 697H198L186 580L172 540L150 495L177 330L166 235Z"/>
</g>
</svg>

  <div class="zoom-control"><span>+</span><span>−</span></div>
  <div class="attribution">Leaflet | © OpenStreetMap contributors</div>

  <aside class="legend">
    <h4>FAIR Housing Overlays</h4>
    <h5>HOUSING OVERLAYS</h5>
    <ul>
      <li class="red"><i></i>18 Minneakoning Overlay - 19 units</li>
      <li class="teal"><i></i>Hart/Commerce Overlay - 58 units</li>
      <li class="blue"><i></i>206 Reaville Road Overlay - 37 units</li>
      <li class="yellow"><i></i>314-324 Hwy 202 Overlay - 78 units</li>
      <li class="purple"><i></i>454 Hwy 202/Case Blvd. Overlay - 32 units</li>
      <li class="green"><i></i>Hwy 202/S. Main St. Overlay - 57 units</li>
    </ul>
    <div class="bounds">
      <h5>TOWNSHIP BOUNDARIES</h5>
      <p><svg class="dash raritan-key" viewBox="0 0 40 40"><path d="M2 13V8Q2 2 8 2H13M27 2H32Q38 2 38 8V13M38 27V32Q38 38 32 38H27M13 38H8Q2 38 2 32V27"/></svg>Raritan Township</p>
      <p><svg class="dash borough-key" viewBox="0 0 40 40"><path d="M2 13V8Q2 2 8 2H13M27 2H32Q38 2 38 8V13M38 27V32Q38 38 32 38H27M13 38H8Q2 38 2 32V27"/></svg>Flemington Borough</p>
    </div>
  </aside>
</div>

<main>
  <section class="overlay red">
    <h3>18 Minneakoning Overlay - 19 units (1 parcel)<b class="arrow"></b></h3>
    <div class="cards">
      <article><h4>Block 16.01, Lot 16.05</h4><p><b>Block:</b> 16.01 | <b>Lot:</b> 16.05</p><button>View on Map</button></article>
    </div>
  </section>
  <section class="overlay teal">
    <h3>Hart/Commerce Overlay - 58 units (2 parcels)<b class="arrow"></b></h3>
    <div class="cards two">
      <article><h4>Block 71, Lot 21 (22 Hart Blvd)</h4><p><b>Block:</b> 71 | <b>Lot:</b> 21</p><button>View on Map</button></article>
      <article><h4>Block 71.02, Lot 21 (Commerce St)</h4><p><b>Block:</b> 71.02 | <b>Lot:</b> 21</p><button>View on Map</button></article>
    </div>
  </section>
  <section class="overlay blue">
    <h3>206 Reaville Road Overlay - 37 units (1 parcel)<b class="arrow"></b></h3>
    <div class="cards">
      <article><h4>Block 72, Lot 7</h4><p><b>Block:</b> 72 | <b>Lot:</b> 7</p><button>View on Map</button></article>
    </div>
  </section>
  <section class="overlay yellow">
    <h3>314-324 Hwy 202 Overlay - 78 units (2 parcels)<b class="arrow"></b></h3>
    <div class="cards two">
      <article><h4>Block 72.23, Lot 31.01</h4><p><b>Block:</b> 72.23 | <b>Lot:</b> 31.01</p><button>View on Map</button></article>
      <article><h4>Block 72.23, Lot 32</h4><p><b>Block:</b> 72.23 | <b>Lot:</b> 32</p><button>View on Map</button></article>
    </div>
  </section>
  <section class="overlay purple">
    <h3>454 Hwy 202/Case Blvd. Overlay - 32 units (1 parcel)<b class="arrow"></b></h3>
    <div class="cards">
      <article><h4>Block 40, Lot 9</h4><p><b>Block:</b> 40 | <b>Lot:</b> 9</p><button>View on Map</button></article>
    </div>
  </section>
  <section class="overlay green">
    <h3>Hwy 202/S. Main St. Overlay - 57 units (4 parcels)<b class="arrow"></b></h3>
    <div class="cards three">
      <article><h4>Block 70, Lot 3 (282/298 S. Main)</h4><p><b>Block:</b> 70 | <b>Lot:</b> 3</p><button>View on Map</button></article>
      <article><h4>Block 70, Lot 13</h4><p><b>Block:</b> 70 | <b>Lot:</b> 13</p><button>View on Map</button></article>
      <article><h4>Block 70, Lot 12 (249/253 Hwy 202/31 S)</h4><p><b>Block:</b> 70 | <b>Lot:</b> 12</p><button>View on Map</button></article>
      <article><h4>Block 70, Lot 14</h4><p><b>Block:</b> 70 | <b>Lot:</b> 14</p><button>View on Map</button></article>
    </div>
  </section>
</main>

<footer class="footer">
  <p>Created by <b>Josh Patra</b></p>
  <div class="badge">
    <span class="github"><svg viewBox="0 0 16 16"><path fill="#fff" d="M8 0C3.58 0 0 3.58 0 8c0 3.54 2.29 6.53 5.47 7.59.4.07.55-.17.55-.38 0-.19-.01-.82-.01-1.49-2.01.37-2.53-.49-2.69-.94-.09-.23-.48-.94-.82-1.13-.28-.15-.68-.52-.01-.53.63-.01 1.08.58 1.23.82.72 1.21 1.87.87 2.33.66.07-.52.28-.87.51-1.07-1.78-.2-3.64-.89-3.64-3.95 0-.87.31-1.59.82-2.15-.08-.2-.36-1.02.08-2.12 0 0 .67-.21 2.2.82.64-.18 1.32-.27 2-.27s1.36.09 2 .27c1.53-1.04 2.2-.82 2.2-.82.44 1.1.16 1.92.08 2.12.51.56.82 1.27.82 2.15 0 3.07-1.87 3.75-3.65 3.95.29.25.54.73.54 1.48 0 1.07-.01 1.93-.01 2.2 0 .21.15.46.55.38A8.01 8.01 0 0 0 16 8c0-4.42-3.58-8-8-8z"/></svg></span>
    <span class="gitea"><svg viewBox="0 0 40 40"><path fill="none" stroke="#fff" stroke-width="3" d="M10 9.200H6C-.5 9.200 .5 18 4.500 20.500Q7.500 22.800 12 22.800"/><path fill="#fff" d="M9 7.800H38.500Q40.300 7.800 39.800 11Q38.500 23 34.500 29Q32.500 32.400 30.500 32.400H19Q15.500 32.400 13 27Q10 20 9 7.800Z"/><path d="M24.300 8V15" stroke="#7ba757" stroke-width="1"/><rect x="18.300" y="16.300" width="10.800" height="10.800" rx="1.500" fill="#7ba757" transform="rotate(26 23.700 21.700)"/><g transform="rotate(26 23.700 21.700)" fill="none" stroke="#fff" stroke-width="1.300"><path d="M21.200 18V25.300M21.200 21.500H24.500Q26.400 21.500 26.400 23.500V25"/></g><circle cx="21.500" cy="24" r="1.100" fill="#fff"/><circle cx="25" cy="25.300" r="1.100" fill="#fff"/></svg></span>
  </div>
</footer>
</body>
</html>
```
FILE: styles.css
```css
html { font-size: 15.806px; }
* { box-sizing: border-box; }
body {
  margin: 0;
  background: #f8f9fb;
  color: #000;
  font-family: "Liberation Sans", Arial, sans-serif;
  font-size: 1.6rem;
  overflow-x: hidden;
}
h1, h3, h4, h5, p, ul { margin: 0; padding: 0; }

.red { --c: #ff6b6b; }
.teal { --c: #4ecdc4; }
.blue { --c: #45b7d1; }
.yellow { --c: #f9ca24; }
.purple { --c: #a55eea; }
.green { --c: #26de81; }

.header {
  height: 10.56rem;
  padding-top: 2rem;
  text-align: center;
  color: #fff;
  background: linear-gradient(135deg, #2c5aa0, #1e3c72);
}
.header h1 { font-size: 3.2rem; line-height: 3.7rem; }
.header p { margin-top: 1rem; font-size: 1.6rem; line-height: 1.8rem; opacity: .9; }

.map { position: relative; height: 54.2rem; }
.map-canvas { display: block; width: 100%; height: 100%; }
.map-canvas path { vector-effect: non-scaling-stroke; }
.street-case, .street, .avenue-case, .avenue, .county-case, .county, .state-case, .state,
.trunk-case, .trunk, .rail-base, .rail-dash { fill: none; stroke-linejoin: round; stroke-linecap: round; }
.street-case { stroke: #cfccc8; stroke-width: 4.2px; }
.street { stroke: #fff; stroke-width: 2.8px; }
.avenue-case { stroke: #c2bfbb; stroke-width: 6.6px; }
.avenue { stroke: #fff; stroke-width: 5px; }
.county-case { stroke: #b9b877; stroke-width: 8.4px; }
.county { stroke: #f3f3bd; stroke-width: 6.4px; }
.state-case { stroke: #b9b877; stroke-width: 10px; }
.state { stroke: #f7fabf; stroke-width: 8px; }
.trunk-case { stroke: #dd7e68; stroke-width: 12px; }
.trunk { stroke: #f9b29c; stroke-width: 10px; }
.rail-base { stroke: #757575; stroke-width: 4.2px; stroke-linecap: butt; }
.rail-dash { stroke: #dcdcdc; stroke-width: 1.8px; stroke-dasharray: 11 11; stroke-linecap: butt; }
.county-line { fill: none; stroke: #b9a0b4; stroke-width: 2px; stroke-dasharray: 9 4 3 4; }
.parcels, .parcels path { fill-opacity: .3; stroke-width: 4.6px; stroke-linejoin: round; }
.raritan { fill: none; stroke: #6a6af2; stroke-opacity: .8; stroke-width: 3.6px; stroke-linecap: round; stroke-dasharray: 15.8 7.9; }
.borough-under { fill: none; stroke: #7a7af0; stroke-width: 3.6px; }
.borough { fill: none; stroke: #f0142c; stroke-width: 4.4px; stroke-dasharray: 18 5.7; }
.shield rect { fill: #f1f1f1; stroke: #c6c6c6; stroke-width: 2px; rx: 4px; }
.pink rect { fill: #f6d7d0; stroke: #dfa296; }
.cream rect { fill: #f2f1d6; stroke: #cdcba0; }
.shield-text { font: 20px "Noto Sans", sans-serif; text-anchor: middle; fill: #555; }
.road-text { font: 16.5px "Noto Sans", sans-serif; fill: #3d3d32; stroke: #f3f3cf; stroke-width: 3px; paint-order: stroke; }
.place-text { font: 25.5px "Noto Sans", sans-serif; text-anchor: middle; fill: #333; stroke: #f6f4ee; stroke-width: 3.5px; paint-order: stroke; }

.zoom-control {
  position: absolute;
  left: 1rem;
  top: 1rem;
  width: 3.4rem;
  border: .2rem solid rgba(0, 0, 0, .22);
  border-radius: .4rem;
  background-clip: padding-box;
}
.zoom-control span {
  display: block;
  height: 3rem;
  background: #fff;
  text-align: center;
  font-weight: bold;
  font-size: 2.2rem;
  line-height: 3.2rem;
}
.zoom-control span:first-child { height: 3.1rem; line-height: 3.3rem; border-bottom: .1rem solid #ccc; border-radius: .2rem .2rem 0 0; }
.zoom-control span:last-child { border-radius: 0 0 .2rem .2rem; }
.attribution {
  position: absolute;
  right: 0;
  bottom: 0;
  padding: 0 .5rem;
  font-size: 1.2rem;
  line-height: 1.68rem;
  color: #333;
  background: rgba(255, 255, 255, .8);
}

.legend {
  position: absolute;
  z-index: 2;
  right: 2rem;
  top: 24.4rem;
  width: 33.5rem;
  height: 40.45rem;
  padding: 1.5rem;
  background: #fff;
  border-radius: .8rem;
  box-shadow: 0 .4rem 1.2rem rgba(0, 0, 0, .15);
}
.legend h4 { font-size: 1.4rem; line-height: 1.6rem; color: #2c5aa0; }
.legend h5 { font-size: 1.2rem; line-height: 1.4rem; color: #555; margin-top: 1rem; }
.legend ul { list-style: none; margin-top: .65rem; }
.legend li {
  display: flex;
  align-items: center;
  height: 3.5rem;
  padding-left: .5rem;
  font-size: 1.4rem;
  white-space: nowrap;
}
.legend i { width: 2rem; height: 2rem; margin-right: .8rem; border-radius: .3rem; background: var(--c); }
.bounds { margin-top: 1.2rem; border-top: .1rem solid #ddd; padding-top: .6rem; }
.bounds p { display: flex; align-items: center; height: 2.9rem; padding-left: .3rem; font-size: 1.2rem; }
.bounds h5 { margin: .9rem 0 .6rem; }
.dash { width: 2rem; height: 2rem; margin-right: .8rem; fill: none; stroke-width: 4; }
.raritan-key { stroke: #6a6aee; }
.borough-key { stroke: #f00; }

main { padding: 2rem 2rem 0; }
.overlay {
  margin-bottom: 2rem;
  overflow: hidden;
  background: #fff;
  border-radius: 1rem;
  box-shadow: 0 .2rem 1rem rgba(0, 0, 0, .1);
}
.overlay h3 {
  display: flex;
  justify-content: space-between;
  align-items: center;
  height: 6.28rem;
  padding: 0 2rem;
  font-size: 1.92rem;
  color: #fff;
  background: var(--c);
}
.arrow {
  width: 1.4rem;
  height: 1.4rem;
  margin-right: .25rem;
  background: #fff;
  clip-path: polygon(0 0, 100% 0, 50% 100%);
}
.cards { display: grid; gap: 1.5rem; padding: 2rem; }
.two { grid-template-columns: 1fr 1fr; }
.three { grid-template-columns: 1fr 1fr 1fr; }
.cards article {
  height: 15.1rem;
  padding: 1.55rem 1.5rem;
  background: #f8f9fb;
  border-left: .4rem solid var(--c);
  border-radius: .8rem;
}
.cards h4 { font-size: 1.6rem; line-height: 1.8rem; color: #333; }
.cards p { margin: 1.65rem 0; line-height: 1.8rem; }
.cards button {
  display: block;
  width: 12.95rem;
  height: 5.2rem;
  padding: 0;
  border: 0;
  border-radius: .5rem;
  font: 1.36rem "Liberation Sans", Arial, sans-serif;
  color: #fff;
  background: var(--c);
}

.footer {
  height: 11.5rem;
  padding-top: 2rem;
  border-top: .1rem solid #dee2e6;
  background: #e9ecef;
  text-align: center;
  color: #495057;
}
.footer p { line-height: 1.8rem; }
.footer p b { color: #2c5aa0; }
.badge {
  display: flex;
  width: 9rem;
  height: 4rem;
  margin: 1.55rem auto 0;
  overflow: hidden;
  border-radius: .8rem;
  box-shadow: 0 .2rem .8rem rgba(0, 0, 0, .12);
}
.badge span { padding: 1rem; background: #333; flex: 0 0 4.8rem; text-align: left; }
.badge .gitea { background: #7ba757; flex: 1; }
.badge svg { display: block; width: 2rem; height: 2rem; }
```
